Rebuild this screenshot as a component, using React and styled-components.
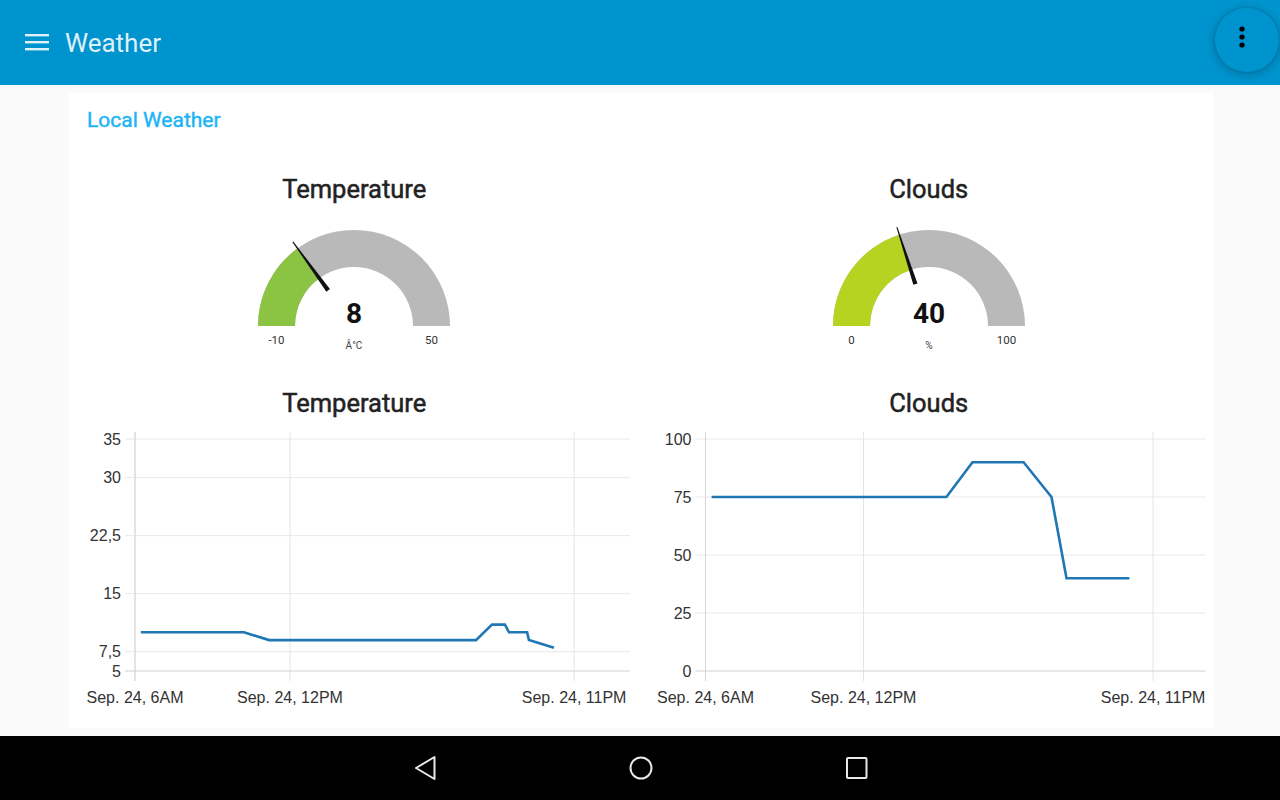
import React from 'react';
import styled, { createGlobalStyle } from 'styled-components';

const GlobalStyle = createGlobalStyle`
    html, body {
        margin: 0;
        padding: 0;
        background: #fafafa;
        font-family: Roboto, 'Noto Sans', sans-serif;
    }
    * { box-sizing: border-box; }
`

const Page = styled.div`
    display: flex;
    flex-direction: column;
    width: 1280px;
    height: 800px;
    overflow: hidden;
    background: #fafafa;
`

const Toolbar = styled.header`
    position: relative;
    display: flex;
    align-items: center;
    height: 85px;
    flex-shrink: 0;
    padding-left: 25px;
    background: #0094ce;
`

const Title = styled.div`
    margin-left: 16px;
    font-size: 26px;
    font-weight: 400;
    color: rgba(255, 255, 255, 0.88);
    margin-top: 1px;
`

const MenuButton = styled.div`
    display: flex;
    align-items: center;
    justify-content: center;
    width: 64px;
    height: 64px;
    margin-left: auto;
    margin-right: 1px;
    align-self: flex-start;
    margin-top: 8px;
    border-radius: 50%;
    background: #0094ce;
    box-shadow: 0 0 0 2px rgba(0, 0, 0, 0.04), 0 2px 8px 2px rgba(0, 0, 0, 0.18);
    padding-right: 10px;
    padding-bottom: 6px;
`

const Main = styled.main`
    flex: 1;
    padding: 8px 66px 0 69px;
`

const Card = styled.section`
    background: #ffffff;
    padding: 15px 0 13px;
`

const CardHeader = styled.h2`
    margin: 0;
    padding-left: 18px;
    font-size: 21px;
    line-height: 24px;
    font-weight: 400;
    -webkit-text-stroke: 0.45px #1eb4f5;
    color: #1eb4f5;
`

const Columns = styled.div`
    display: grid;
    grid-template-columns: 1fr 1fr;
    margin-top: 43px;
`

const Column = styled.div`
    display: flex;
    flex-direction: column;
    align-items: center;
`

const WidgetTitle = styled.div`
    font-size: 25.5px;
    line-height: 28px;
    font-weight: 400;
    color: #222;
    -webkit-text-stroke: 0.5px #222;
    margin-left: ${p => p.$shift || 0}px;
`

const GaugeSvg = styled.svg`
    display: block;
    margin-top: 12px;
    margin-bottom: 34px;
    margin-left: ${p => p.$shift || 0}px;
`

const ChartSvg = styled.svg`
    display: block;
    margin-top: 1px;
    align-self: stretch;
`

const NavBar = styled.nav`
    display: flex;
    align-items: center;
    justify-content: center;
    gap: 192px;
    height: 64px;
    flex-shrink: 0;
    background: #000;
    padding-left: 1px;
`

const NavIcon = styled.svg`
    display: block;
`

function polar(cx, cy, r, t) {
    const a = Math.PI * (1 - t);
    return [cx + r * Math.cos(a), cy - r * Math.sin(a)];
}

function bandPath(cx, cy, ro, ri, t0, t1) {
    const [x0, y0] = polar(cx, cy, ro, t0);
    const [x1, y1] = polar(cx, cy, ro, t1);
    const [x2, y2] = polar(cx, cy, ri, t1);
    const [x3, y3] = polar(cx, cy, ri, t0);
    return `M${x0} ${y0} A${ro} ${ro} 0 0 1 ${x1} ${y1} L${x2} ${y2} A${ri} ${ri} 0 0 0 ${x3} ${y3} Z`;
}

function Gauge({ value, min, max, unit, color, shift }) {
    const cx = 120, cy = 111, ro = 96, ri = 59;
    const t = (value - min) / (max - min);
    const a = Math.PI * (1 - t);
    const ux = Math.cos(a), uy = -Math.sin(a);
    const px = -uy, py = ux;
    const r1 = 44, r2 = 104, w1 = 2.2, w2 = 0.5;
    const pts = [
        [cx + ux * r1 + px * w1, cy + uy * r1 + py * w1],
        [cx + ux * r2 + px * w2, cy + uy * r2 + py * w2],
        [cx + ux * r2 - px * w2, cy + uy * r2 - py * w2],
        [cx + ux * r1 - px * w1, cy + uy * r1 - py * w1],
    ].map(p => p.join(',')).join(' ');
    const mid = (ro + ri) / 2;
    return (
        <GaugeSvg width="240" height="140" $shift={shift}>
            <path d={bandPath(cx, cy, ro, ri, 0, 1)} fill="#b9b9b9" />
            <path d={bandPath(cx, cy, ro, ri, 0, t)} fill={color} />
            <polygon points={pts} fill="#111" />
            <text x={cx} y={cy - 3} textAnchor="middle" fontFamily="Roboto, sans-serif" fontWeight="700" fontSize="28" fill="#111">{value}</text>
            <text x={cx - mid} y={cy + 18} textAnchor="middle" fontFamily="Roboto, sans-serif" fontSize="11.5" fill="#333">{min}</text>
            <text x={cx + mid} y={cy + 18} textAnchor="middle" fontFamily="Roboto, sans-serif" fontSize="11.5" fill="#333">{max}</text>
            <text x={cx} y={cy + 23} textAnchor="middle" fontFamily="Roboto, sans-serif" fontSize="10" fill="#444">{unit}</text>
        </GaugeSvg>
    );
}

const X_LABELS = [[6, 'Sep. 24, 6AM'], [12, 'Sep. 24, 12PM'], [23, 'Sep. 24, 11PM']];

function LineChart({ axisX, rightX, pxPerHour, yMin, yMax, ticks, data }) {
    const top = 21, bottom = 253;
    const xPos = h => axisX + (h - 6) * pxPerHour;
    const yPos = v => bottom - (v - yMin) / (yMax - yMin) * (bottom - top);
    const line = data.map(([h, v], i) => `${i ? 'L' : 'M'}${xPos(h).toFixed(1)} ${yPos(v).toFixed(1)}`).join(' ');
    return (
        <ChartSvg height="297">
            {X_LABELS.map(([h]) => (
                <line key={h} x1={xPos(h)} x2={xPos(h)} y1="14" y2="263" stroke="#e4e4e4" strokeWidth="1" />
            ))}
            {ticks.map(([v]) => (
                <line key={v} x1={axisX - 10} x2={rightX} y1={yPos(v)} y2={yPos(v)} stroke={v === yMin ? '#d0d0d0' : '#e8e8e8'} strokeWidth="1" />
            ))}
            <line x1={axisX} x2={axisX} y1="14" y2="263" stroke="#d6d6d6" strokeWidth="1" />
            {ticks.map(([v, label]) => (
                <text key={v} x={axisX - 14} y={yPos(v) + 5.5} textAnchor="end" fontFamily="'Liberation Sans', Arial, sans-serif" fontSize="16" fill="#333">{label}</text>
            ))}
            {X_LABELS.map(([h, label]) => (
                <text key={h} x={xPos(h)} y="285" textAnchor="middle" fontFamily="'Liberation Sans', Arial, sans-serif" fontSize="16" fill="#333">{label}</text>
            ))}
            <path d={line} fill="none" stroke="#1f77b4" strokeWidth="2.6" strokeLinejoin="miter" />
        </ChartSvg>
    );
}

const tempData = [
    [6.23, 10], [10.22, 10], [11.19, 9], [19.2, 9], [19.82, 11], [20.32, 11],
    [20.48, 10], [21.18, 10], [21.25, 9], [22.22, 8],
];

const cloudData = [
    [6.23, 75], [15.15, 75], [16.14, 90], [18.08, 90], [19.14, 75], [19.71, 40], [22.1, 40],
];

const tempTicks = [[5, '5'], [7.5, '7,5'], [15, '15'], [22.5, '22,5'], [30, '30'], [35, '35']];
const cloudTicks = [[0, '0'], [25, '25'], [50, '50'], [75, '75'], [100, '100']];

function Hamburger() {
    return (
        <svg width="24" height="17" viewBox="0 0 24 17">
            <rect x="0" y="0" width="24" height="2.4" fill="rgba(255,255,255,0.88)" />
            <rect x="0" y="7" width="24" height="2.4" fill="rgba(255,255,255,0.88)" />
            <rect x="0" y="14" width="24" height="2.4" fill="rgba(255,255,255,0.88)" />
        </svg>
    );
}

function Dots() {
    return (
        <svg width="6" height="22" viewBox="0 0 6 22">
            <circle cx="3" cy="3" r="2.6" fill="#000" />
            <circle cx="3" cy="11" r="2.6" fill="#000" />
            <circle cx="3" cy="19" r="2.6" fill="#000" />
        </svg>
    );
}

export default function App() {
    return (
        <Page>
            <GlobalStyle />
            <Toolbar>
                <Hamburger />
                <Title>Weather</Title>
                <MenuButton><Dots /></MenuButton>
            </Toolbar>
            <Main>
                <Card>
                    <CardHeader>Local Weather</CardHeader>
                    <Columns>
                        <Column>
                            <WidgetTitle $shift={-2}>Temperature</WidgetTitle>
                            <Gauge value={8} min={-10} max={50} unit="Â°C" color="#8bc443" shift={-2} />
                            <WidgetTitle $shift={-2}>Temperature</WidgetTitle>
                            <LineChart axisX={66} rightX={561} pxPerHour={25.83} yMin={5} yMax={35} ticks={tempTicks} data={tempData} />
                        </Column>
                        <Column>
                            <WidgetTitle $shift={2}>Clouds</WidgetTitle>
                            <Gauge value={40} min={0} max={100} unit="%" color="#b6d321" shift={2} />
                            <WidgetTitle $shift={2}>Clouds</WidgetTitle>
                            <LineChart axisX={63.5} rightX={563.5} pxPerHour={26.33} yMin={0} yMax={100} ticks={cloudTicks} data={cloudData} />
                        </Column>
                    </Columns>
                </Card>
            </Main>
            <NavBar>
                <NavIcon width="24" height="26" viewBox="0 0 24 26">
                    <path d="M3 13 L21.5 2 L21.5 24 Z" fill="none" stroke="#e8e8e8" strokeWidth="2" strokeLinejoin="round" />
                </NavIcon>
                <NavIcon width="24" height="26" viewBox="0 0 24 26">
                    <circle cx="12" cy="13" r="10.5" fill="none" stroke="#e8e8e8" strokeWidth="2" />
                </NavIcon>
                <NavIcon width="24" height="26" viewBox="0 0 24 26">
                    <rect x="2" y="3" width="19.5" height="20" rx="1" fill="none" stroke="#e8e8e8" strokeWidth="2" />
                </NavIcon>
            </NavBar>
        </Page>
    );
}
